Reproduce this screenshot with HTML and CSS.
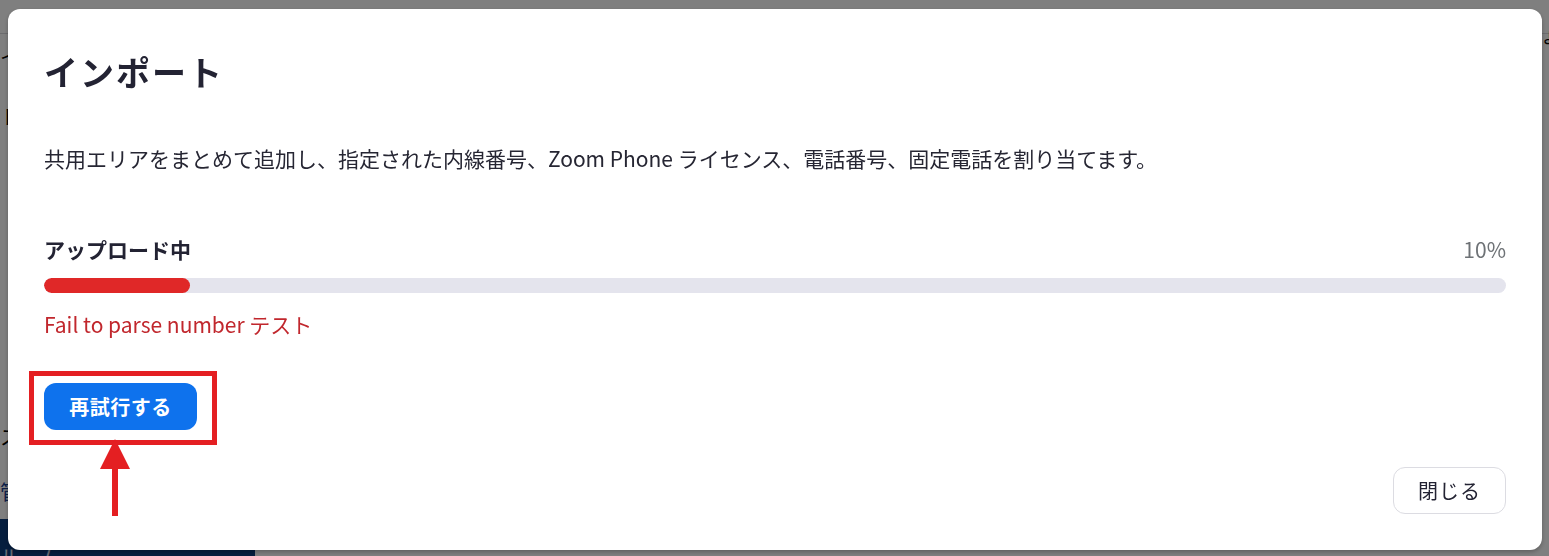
FILE: index.html
```html
<!DOCTYPE html>
<html lang="ja">
<head>
<meta charset="utf-8">
<title>インポート</title>
<link rel="stylesheet" href="styles.css">
</head>
<body>
<div class="page">
  <div class="page-top"></div>
  <div class="page-nav">
    <div class="nav-item n1">イ</div>
    <div class="nav-item n2">ト</div>
    <div class="nav-item n3">ス</div>
    <div class="nav-item n4">管</div>
    <div class="nav-active">ル　ム</div>
  </div>
  <div class="page-right">ょ</div>
</div>
<div class="overlay">
  <div class="modal">
    <h1 class="title">インポート</h1>
    <p class="desc">共用エリアをまとめて追加し、指定された内線番号、Zoom Phone ライセンス、電話番号、固定電話を割り当てます。</p>
    <div class="progress-head">
      <span class="progress-label">アップロード中</span>
      <span class="progress-pct">10%</span>
    </div>
    <div class="track"><div class="fill" style="width:10%"></div></div>
    <p class="error">Fail to parse number テスト</p>
    <div class="retry-wrap">
      <button class="btn-primary">再試行する</button>
      <div class="mark-box"></div>
      <div class="mark-arrow">
        <div class="arrow-head"></div>
        <div class="arrow-shaft"></div>
      </div>
    </div>
    <div class="footer">
      <button class="btn-secondary">閉じる</button>
    </div>
  </div>
</div>
</body>
</html>
```
FILE: styles.css
```css
html, body {
  margin: 0;
  padding: 0;
  width: 1549px;
  height: 556px;
  overflow: hidden;
  font-family: "Noto Sans CJK JP", "Noto Sans", sans-serif;
}

.page {
  width: 1549px;
  height: 556px;
  background: #ffffff;
  position: relative;
  overflow: hidden;
}

.page-top {
  height: 33px;
  border-bottom: 1px solid #d8d8dc;
}

.page-nav {
  width: 255px;
  display: flex;
  flex-direction: column;
  font-size: 20px;
  color: #000;
}

.nav-item {
  height: 30px;
  line-height: 30px;
}
.n1 { margin-top: 8px; }
.n2 { margin-top: 30px; }
.n3 { margin-top: 290px; }
.n4 { margin-top: 25px; color: #1a3d8f; }

.nav-active {
  margin-top: 12px;
  height: 60px;
  background: #0b3c7d;
  color: #d0d8e8;
  line-height: 60px;
  padding-top: 8px;
  box-sizing: border-box;
}

.page-right {
  position: absolute;
  right: -10px;
  top: 22px;
  font-size: 18px;
}

.overlay {
  position: fixed;
  inset: 0;
  background: rgba(0, 0, 0, 0.5);
  padding: 9px 7px 6px 8px;
  box-sizing: border-box;
}

.modal {
  height: 541px;
  box-sizing: border-box;
  background: #ffffff;
  border-radius: 12px;
  box-shadow: 0 2px 4px rgba(0, 0, 0, 0.25);
  padding: 41px 36px 36px 36px;
  display: flex;
  flex-direction: column;
  color: #232333;
}

.title {
  margin: 0;
  font-size: 34px;
  line-height: 44px;
  font-weight: 700;
  letter-spacing: 2px;
  color: #232333;
}

.desc {
  margin: 50px 0 0 0;
  font-size: 21px;
  line-height: 28px;
  color: #262633;
}

.progress-head {
  margin-top: 63px;
  display: flex;
  justify-content: space-between;
  align-items: center;
  height: 28px;
}

.progress-label {
  font-size: 21px;
  font-weight: 700;
  color: #232333;
}

.progress-pct {
  font-size: 21px;
  color: #6e7276;
}

.track {
  margin-top: 15px;
  height: 15px;
  border-radius: 8px;
  background: #e4e4ed;
  overflow: hidden;
}

.fill {
  height: 100%;
  background: #e02828;
  border-radius: 8px;
}

.error {
  margin: 17px 0 0 0;
  font-size: 21px;
  line-height: 28px;
  color: #c1272d;
}

.retry-wrap {
  margin-top: 45px;
  position: relative;
  align-self: flex-start;
}

.btn-primary {
  display: block;
  width: 153px;
  height: 47px;
  border: none;
  border-radius: 12px;
  background: #0e72ed;
  color: #ffffff;
  font-family: inherit;
  font-size: 20px;
  font-weight: 700;
  letter-spacing: 0.5px;
  padding: 0;
}

.mark-box {
  position: absolute;
  left: -15px;
  top: -12px;
  width: 188px;
  height: 74px;
  border: 5px solid #e41f22;
  box-sizing: border-box;
}

.mark-arrow {
  position: absolute;
  left: 56px;
  top: 56px;
  width: 30px;
  display: flex;
  flex-direction: column;
  align-items: center;
}

.arrow-head {
  width: 0;
  height: 0;
  border-left: 15px solid transparent;
  border-right: 15px solid transparent;
  border-bottom: 30px solid #e41f22;
}

.arrow-shaft {
  width: 6px;
  height: 47px;
  background: #e41f22;
}

.footer {
  margin-top: 37px;
  display: flex;
  justify-content: flex-end;
}

.btn-secondary {
  width: 113px;
  height: 47px;
  border: 1px solid #dcdce2;
  border-radius: 12px;
  background: #ffffff;
  color: #232333;
  font-family: inherit;
  font-size: 20px;
  padding: 0;
  letter-spacing: 1px;
}
```
